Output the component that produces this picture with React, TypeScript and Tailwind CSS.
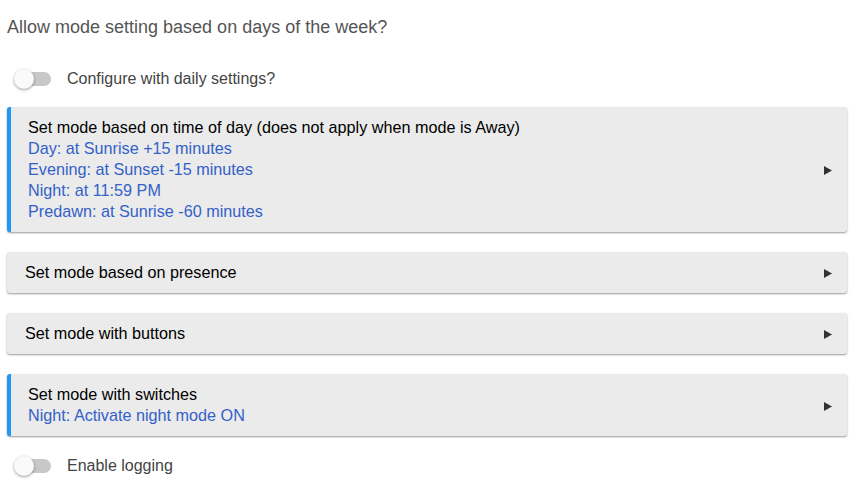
import { ReactNode } from 'react'

type Section = {
  title: string
  lines: string[]
  active: boolean
}

const sections: Section[] = [
  {
    title: 'Set mode based on time of day (does not apply when mode is Away)',
    lines: [
      'Day: at Sunrise +15 minutes',
      'Evening: at Sunset -15 minutes',
      'Night: at 11:59 PM',
      'Predawn: at Sunrise -60 minutes',
    ],
    active: true,
  },
  { title: 'Set mode based on presence', lines: [], active: false },
  { title: 'Set mode with buttons', lines: [], active: false },
  { title: 'Set mode with switches', lines: ['Night: Activate night mode ON'], active: true },
]

function Toggle({ label }: { label: ReactNode }) {
  return (
    <div className="flex items-center h-6">
      <div className="relative w-[60px] h-6 flex-shrink-0">
        <div className="absolute left-[9px] top-[5px] w-[35px] h-[14px] rounded-full bg-[#c8c8c8]" />
        <div className="absolute left-[7px] top-[2px] w-5 h-5 rounded-full bg-[#fafafa] shadow-[0_1px_3px_rgba(0,0,0,0.4)]" />
      </div>
      <span className="text-[16px] text-[#444]">{label}</span>
    </div>
  )
}

function Card({ s }: { s: Section }) {
  return (
    <div
      className={
        'flex items-center rounded-[3px] bg-[#ebebeb] shadow-[0_1px_2px_rgba(0,0,0,0.4)] py-[10px] pr-[15px] ' +
        (s.active ? 'border-l-4 border-[#2196f3] pl-[17px]' : 'pl-[18px]')
      }
    >
      <div className="flex-1 text-[16.2px] leading-[21px]">
        <div className="text-black">{s.title}</div>
        {s.lines.map(l => (
          <div key={l} className="text-[#3461c8]">{l}</div>
        ))}
      </div>
      <svg width="8" height="9" viewBox="0 0 8 9" className="flex-shrink-0 mt-[2px]">
        <polygon points="0,0 8,4.5 0,9" fill="#333" />
      </svg>
    </div>
  )
}

export default function App() {
  return (
    <div className="w-[861px] h-[490px] bg-white overflow-hidden font-['Liberation_Sans',Arial,sans-serif]">
      <div className="pl-[7px] w-[847px]">
        <h1 className="pt-[15px] text-[18px] leading-6 text-[#555]">
          Allow mode setting based on days of the week?
        </h1>

        <div className="mt-[28px]">
          <Toggle label="Configure with daily settings?" />
        </div>

        <div className="mt-4 flex flex-col gap-5">
          {sections.map(s => (
            <Card key={s.title} s={s} />
          ))}
        </div>

        <div className="mt-[18px]">
          <Toggle label="Enable logging" />
        </div>
      </div>
    </div>
  )
}
